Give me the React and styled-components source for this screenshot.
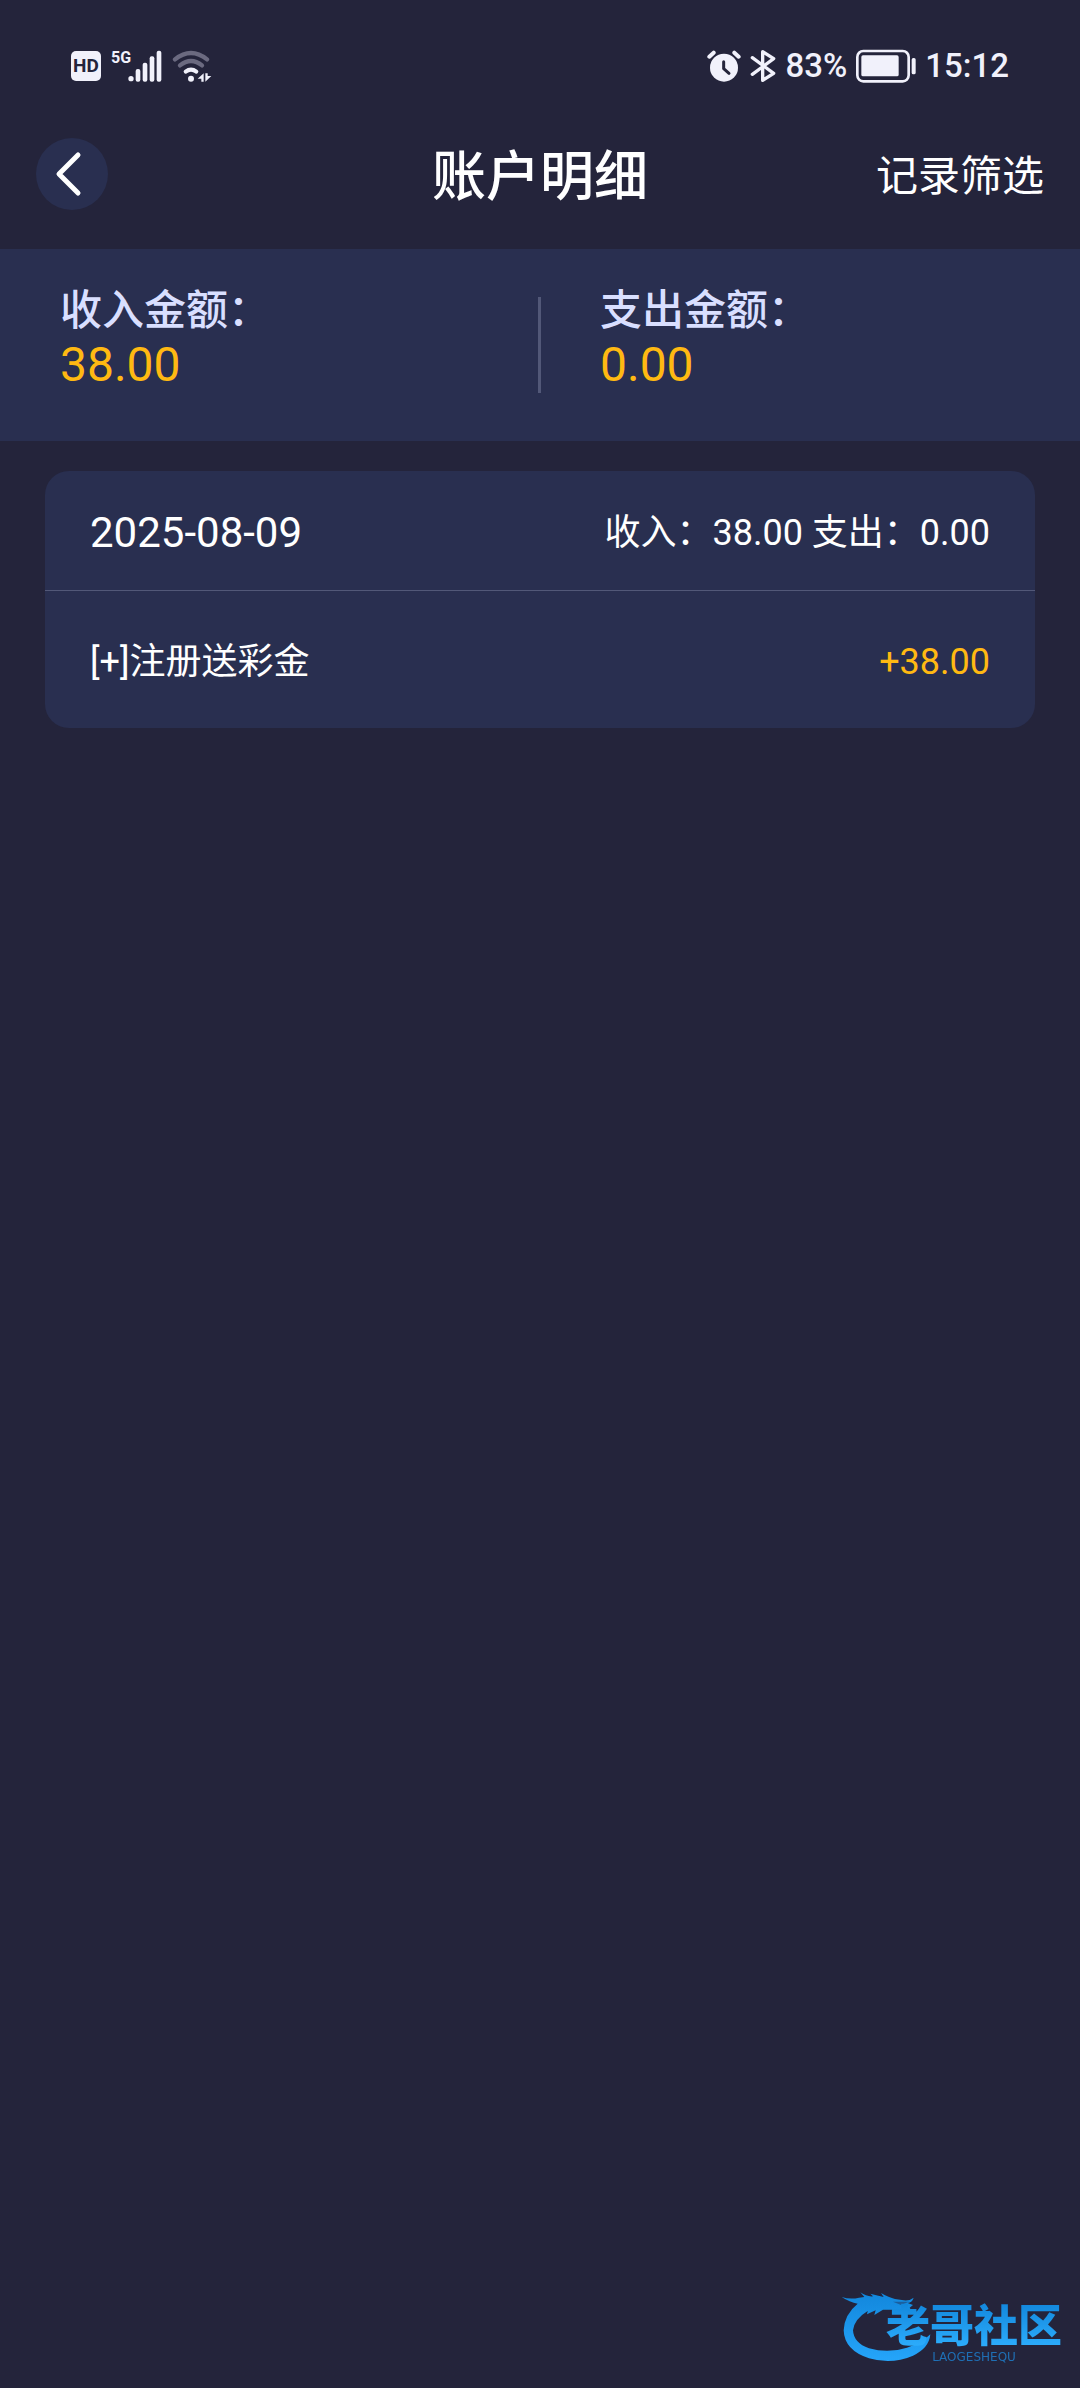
import React from 'react';
import styled, { createGlobalStyle } from 'styled-components';

const summary = [
  { label: '收入金额：', value: '38.00' },
  { label: '支出金额：', value: '0.00' },
];

const days = [
  {
    date: '2025-08-09',
    income: '38.00',
    expense: '0.00',
    records: [{ title: '[+]注册送彩金', amount: '+38.00' }],
  },
];

const SignalIcon = () => (
  <svg width="34" height="32" viewBox="234 56 102 96" fill="#f1f1fb" aria-hidden="true">
    <circle cx="243" cy="142" r="8" />
    <rect x="257" y="113" width="14" height="38" rx="6" />
    <rect x="278" y="94" width="14" height="57" rx="6" />
    <rect x="299" y="75" width="14" height="76" rx="6" />
    <rect x="320" y="58" width="14" height="93" rx="6" />
  </svg>
);

const WifiIcon = () => (
  <svg width="40" height="32" viewBox="360 56 120 96" fill="none" strokeLinecap="round" aria-hidden="true">
    <path d="M369 84 Q417 46 465 84" stroke="#6b6a80" strokeWidth="13" />
    <path d="M384 102 Q417 76 450 102" stroke="#6b6a80" strokeWidth="13" />
    <path d="M401 121 Q417 109 433 121" stroke="#f1f1fb" strokeWidth="12" />
    <circle cx="417" cy="142" r="9" fill="#f1f1fb" />
    <path d="M455 126 V151 H448 V142 H437 Z M460 151 V126 H467 V134 H478 Z" fill="#f1f1fb" />
  </svg>
);

const AlarmIcon = () => (
  <svg width="34" height="34" viewBox="52 54 102 102" fill="none" strokeLinecap="round" aria-hidden="true">
    <circle cx="103" cy="110" r="42" fill="#f1f1fb" />
    <path d="M59 77 L72 65 M147 77 L134 65" stroke="#f1f1fb" strokeWidth="12" />
    <path d="M102 92 V113 L118 127" stroke="#24243b" strokeWidth="9" strokeLinejoin="round" />
  </svg>
);

const BluetoothIcon = () => (
  <svg width="26" height="34" viewBox="183 54 78 102" fill="none" aria-hidden="true">
    <path
      d="M190 80 L254 127 L221 148 V62 L254 83 L190 130"
      stroke="#f1f1fb"
      strokeWidth="10"
      strokeLinecap="round"
      strokeLinejoin="round"
    />
  </svg>
);

const BatteryIcon = () => (
  <svg width="60" height="34" viewBox="495 56 180 102" aria-hidden="true">
    <rect x="499" y="62" width="154" height="91" rx="18" fill="none" stroke="#f1f1fb" strokeWidth="8" />
    <rect x="511" y="75" width="112" height="63" rx="5" fill="#f1f1fb" />
    <rect x="662" y="83" width="12" height="49" rx="5" fill="#f1f1fb" />
  </svg>
);

const BackIcon = () => (
  <svg width="72" height="72" viewBox="0 0 72 72" fill="none" aria-hidden="true">
    <path d="M42 17 L23 36 L42 55" stroke="#fff" strokeWidth="5" strokeLinecap="round" strokeLinejoin="round" />
  </svg>
);

const DragonIcon = () => (
  <svg width="90" height="72" viewBox="34 34 270 216" aria-hidden="true">
    <defs>
      <linearGradient id="dragon" x1="0" y1="0" x2="0" y2="1">
        <stop offset="0" stopColor="#1287dc" />
        <stop offset="1" stopColor="#25a5fa" />
      </linearGradient>
    </defs>
    <path
      fill="url(#dragon)"
      d="M36 52 Q62 60 88 54 L104 52 L92 38 Q112 52 130 50 L122 42 Q144 48 162 52 L154 40
        Q178 54 196 58 L222 62 Q240 64 252 54 Q248 68 234 70 L250 76 L240 84 L246 94 L226 88
        L200 90 L184 90 L160 90 L134 106 L138 92 L112 104 L114 94
        Q74 118 70 152 Q72 190 118 206 Q176 222 232 204 Q276 190 302 164
        Q298 206 250 228 Q186 256 118 236 Q44 212 42 152 Q44 104 84 72 Q60 68 36 52 Z"
    />
    <path d="M190 66 L238 66 L214 76 Z" fill="#1b5f9e" />
  </svg>
);

const App = () => {
  return (
    <>
      <GlobalStyle />
      <Page lang="zh-CN">
        <StatusBar>
          <StatusGroup $gap="10px">
            <HdBadge>HD</HdBadge>
            <Cellular>
              <Network>5G</Network>
              <SignalIcon />
            </Cellular>
            <WifiIcon />
          </StatusGroup>
          <StatusGroup $gap="9px">
            <AlarmIcon />
            <BluetoothIcon />
            <span>83%</span>
            <BatteryIcon />
            <span>15:12</span>
          </StatusGroup>
        </StatusBar>

        <Header>
          <BackButton type="button" aria-label="返回">
            <BackIcon />
          </BackButton>
          <Title>账户明细</Title>
          <FilterButton type="button">记录筛选</FilterButton>
        </Header>

        <Summary>
          {summary.map(({ label, value }) => (
            <SummaryItem key={label}>
              <SummaryLabel>{label}</SummaryLabel>
              <SummaryValue>{value}</SummaryValue>
            </SummaryItem>
          ))}
        </Summary>

        <main>
          {days.map(({ date, income, expense, records }) => (
            <Card key={date}>
              <CardHead>
                <CardDate>{date}</CardDate>
                <span>收入：{income} 支出：{expense}</span>
              </CardHead>
              {records.map(({ title, amount }) => (
                <Record key={title}>
                  <span>{title}</span>
                  <Amount>{amount}</Amount>
                </Record>
              ))}
            </Card>
          ))}
        </main>

        <Watermark>
          <DragonIcon />
          <Brand>
            <BrandName>老哥社区</BrandName>
            <BrandLatin>LAOGESHEQU</BrandLatin>
          </Brand>
        </Watermark>
      </Page>
    </>
  );
};

const GlobalStyle = createGlobalStyle`
  * {
    box-sizing: border-box;
  }

  body {
    margin: 0;
    background: #24243b;
  }

  button {
    padding: 0;
    border: none;
    color: inherit;
    font: inherit;
    cursor: pointer;
  }
`;

const Page = styled.div`
  min-height: 100vh;
  background: #24243b;
  color: #fff;
  font-family: Roboto, "Noto Sans CJK SC", sans-serif;
  font-size: 36px;
  line-height: 48px;
`;

const StatusBar = styled.div`
  display: flex;
  justify-content: space-between;
  align-items: center;
  height: 99px;
  padding: 33px 71px 0;
  color: #f1f1fb;
  font-size: 33px;
  font-weight: 500;
`;

const StatusGroup = styled.div`
  display: flex;
  align-items: center;
  gap: ${(props) => props.$gap};
`;

const HdBadge = styled.span`
  width: 30px;
  border-radius: 5px;
  background: #f1f1fb;
  color: #24243b;
  font-size: 19px;
  font-weight: 700;
  line-height: 30px;
  text-align: center;
`;

const Cellular = styled.span`
  display: flex;
  align-items: flex-start;

  svg {
    margin-left: -3px;
  }
`;

const Network = styled.span`
  font-size: 16px;
  font-weight: 700;
  line-height: 16px;
`;

const Header = styled.header`
  display: grid;
  grid-template-columns: 1fr auto 1fr;
  align-items: center;
  height: 150px;
  padding: 0 36px;
`;

const BackButton = styled.button`
  width: 72px;
  height: 72px;
  border-radius: 50%;
  background: #292f50;

  svg {
    display: block;
  }
`;

const Title = styled.h1`
  margin: 0;
  padding-top: 8px;
  font-size: 54px;
  font-weight: 500;
  line-height: 60px;
`;

const FilterButton = styled.button`
  justify-self: end;
  background: none;

  && {
    padding-top: 6px;
    font-size: 42px;
  }
`;

const Summary = styled.section`
  display: flex;
  height: 192px;
  background: #292f50;
`;

const SummaryItem = styled.div`
  position: relative;
  flex: 1;
  padding: 38px 60px;

  & + &::before {
    content: "";
    position: absolute;
    top: 48px;
    left: -2px;
    width: 3px;
    height: 96px;
    background: #525878;
  }
`;

const SummaryLabel = styled.div`
  color: #d9dfff;
  font-size: 42px;
  font-weight: 500;
  line-height: 48px;
`;

const SummaryValue = styled.div`
  color: #ffb912;
  font-size: 48px;
  line-height: 60px;
`;

const Card = styled.section`
  margin: 30px 45px;
  border-radius: 24px;
  background: #292f50;
`;

const CardHead = styled.div`
  display: flex;
  justify-content: space-between;
  align-items: center;
  height: 120px;
  padding: 5px 45px 0;
  border-bottom: 1px solid #525878;
`;

const CardDate = styled.span`
  font-size: 42px;
`;

const Record = styled.div`
  display: flex;
  justify-content: space-between;
  align-items: center;
  height: 137px;
  padding: 4px 45px 0;
`;

const Amount = styled.span`
  color: #ffb912;
`;

const Watermark = styled.div`
  position: fixed;
  right: 18px;
  bottom: 25px;
  display: flex;
  align-items: flex-end;
`;

const Brand = styled.div`
  display: flex;
  flex-direction: column;
  align-items: center;
  margin-left: -45px;
`;

const BrandName = styled.span`
  background: linear-gradient(#1287dc, #2fb0ff);
  background-clip: text;
  color: transparent;
  font-size: 44px;
  font-weight: 900;
  line-height: 48px;
`;

const BrandLatin = styled.span`
  color: #1f6fb4;
  font-family: "DejaVu Sans", sans-serif;
  font-size: 12px;
  line-height: 12px;
`;

export default App;
